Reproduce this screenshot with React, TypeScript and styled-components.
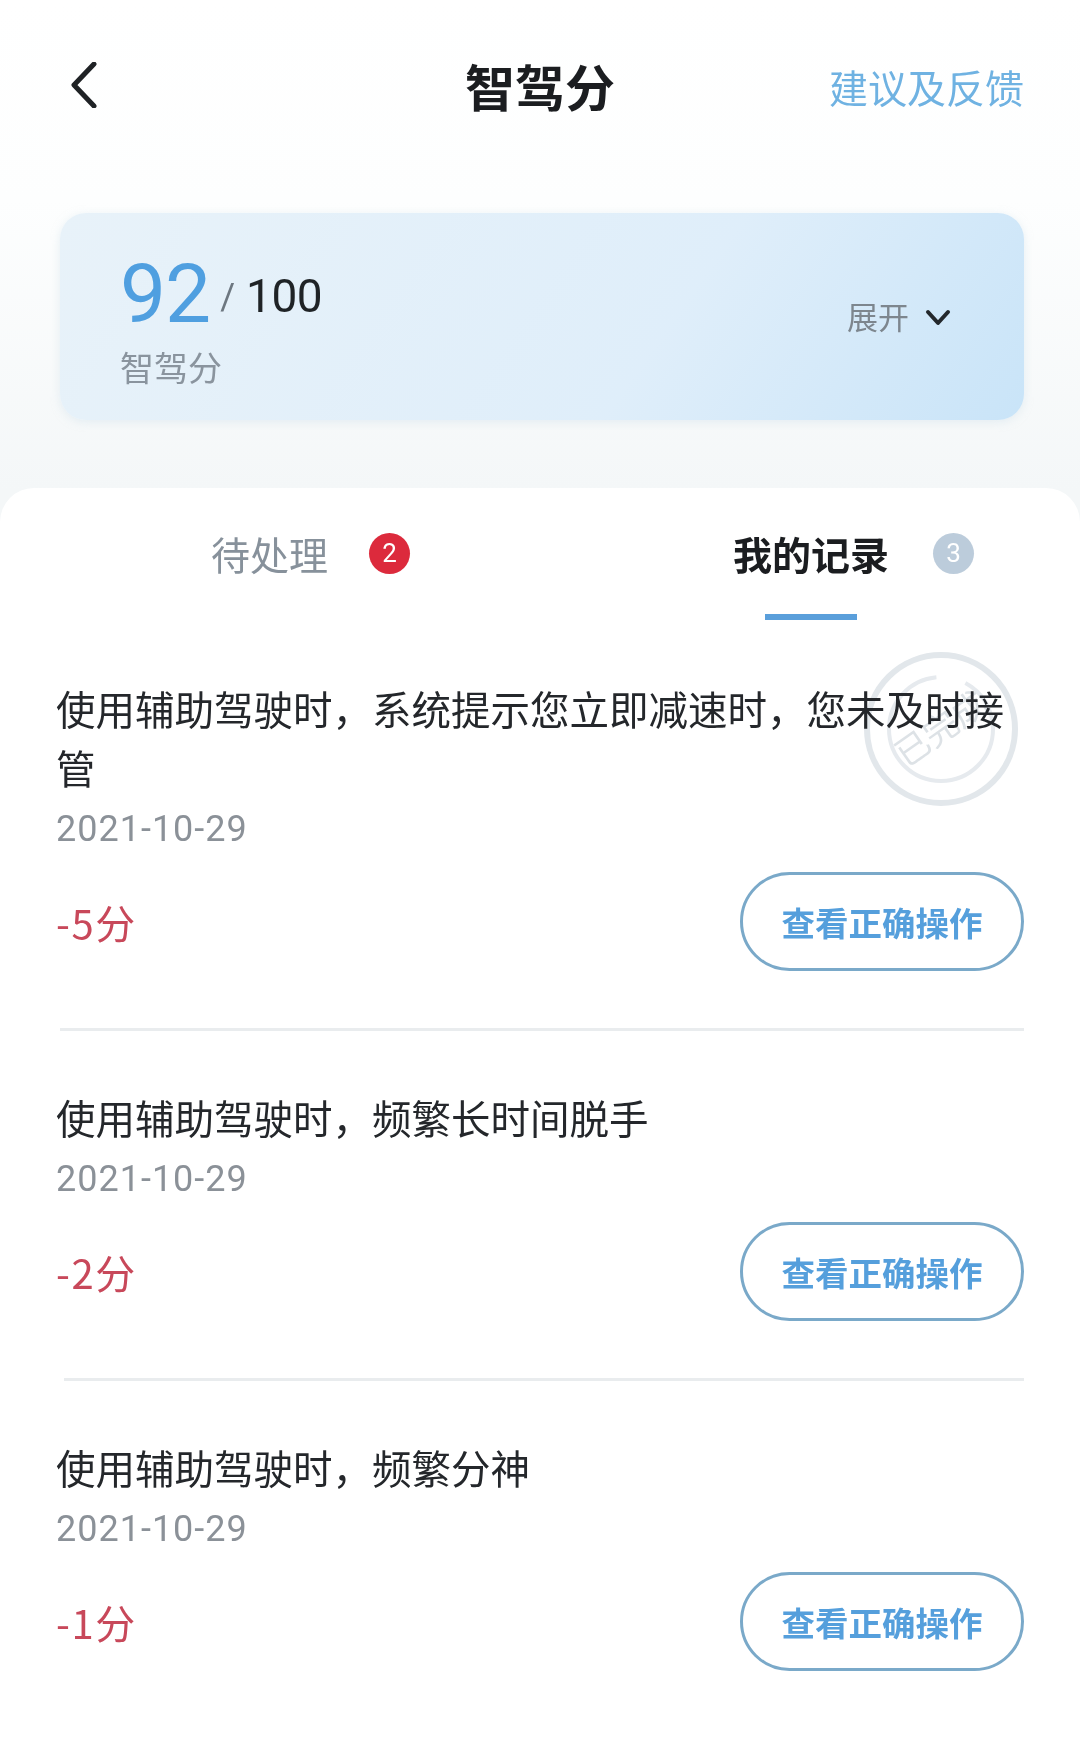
import React from 'react'
import styled, { createGlobalStyle } from 'styled-components'

const GlobalStyle = createGlobalStyle`
  html, body {
    margin: 0;
    padding: 0;
    background: #ffffff;
  }
  body {
    font-family: "Noto Sans CJK SC", "Noto Sans", sans-serif;
  }
`

const Page = styled.div`
  width: 1080px;
  height: 1742px;
  overflow: hidden;
  background: linear-gradient(180deg, #ffffff 0, #fdfefe 200px, #f4f7f8 490px);
  filter: blur(0.6px);
`

const Header = styled.header`
  position: relative;
  height: 213px;
  padding: 62px 56px 0 70px;
  box-sizing: border-box;
  display: flex;
  align-items: flex-start;
  justify-content: space-between;
`

const BackIcon = styled.svg`
  width: 28px;
  height: 46px;
  display: block;
`

const Title = styled.h1`
  position: absolute;
  left: 0;
  right: 0;
  top: 54px;
  margin: 0;
  text-align: center;
  font-size: 50px;
  line-height: 62px;
  font-weight: 700;
  color: #1b1d20;
`

const Feedback = styled.a`
  font-size: 39px;
  line-height: 50px;
  margin-top: -1px;
  color: #6fb2e2;
`

const ScoreCard = styled.section`
  margin: 0 56px 0 60px;
  height: 207px;
  box-sizing: border-box;
  padding: 42px 73px 0 60px;
  border-radius: 26px;
  background: linear-gradient(125deg, #e8f2f9 0%, #dfeefa 62%, #c9e4f8 100%);
  box-shadow: 0 2px 8px rgba(210, 225, 235, 0.5);
  display: flex;
  justify-content: space-between;
`

const ScoreLine = styled.div`
  display: flex;
  align-items: flex-start;
  height: 78px;
  font-family: Roboto, "Liberation Sans", sans-serif;
`

const ScoreValue = styled.span`
  font-size: 82px;
  line-height: 78px;
  color: #4f9fe0;
  letter-spacing: -1px;
`

const ScoreSlash = styled.span`
  font-size: 36px;
  line-height: 44px;
  margin: 20px 11px 0 10px;
  color: #6d7780;
`

const ScoreTotal = styled.span`
  font-size: 46px;
  line-height: 54px;
  margin-top: 14px;
  color: #1f2326;
  letter-spacing: -0.5px;
`

const ScoreLabel = styled.div`
  margin-top: 12px;
  font-size: 34px;
  line-height: 44px;
  color: #8a949e;
`

const Expand = styled.div`
  display: flex;
  align-items: center;
  gap: 16px;
  height: 42px;
  margin-top: 42px;
  font-size: 31px;
  color: #7d868e;
`

const ExpandLabel = styled.span`
  margin-bottom: 5px;
`

const ChevronDown = styled.svg`
  width: 26px;
  height: 18px;
  display: block;
`

const Panel = styled.main`
  margin-top: 68px;
  height: 1254px;
  box-sizing: border-box;
  background: #ffffff;
  border-radius: 34px 34px 0 0;
  padding: 0 56px;
`

const Tabs = styled.nav`
  display: grid;
  grid-template-columns: 484px 484px;
  height: 132px;
`

const Tab = styled.div<{ $left: number }>`
  position: relative;
  display: flex;
  align-items: center;
  height: 132px;
  padding-left: ${p => p.$left}px;
  padding-bottom: 2px;
  box-sizing: border-box;
`

const TabText = styled.span<{ $active?: boolean }>`
  font-size: 39px;
  line-height: 50px;
  white-space: nowrap;
  font-weight: ${p => (p.$active ? 700 : 400)};
  color: ${p => (p.$active ? '#1b1d20' : '#87919b')};
`

const Badge = styled.span<{ $color: string; $gap: number }>`
  flex: none;
  margin-left: ${p => p.$gap}px;
  width: 41px;
  height: 41px;
  border-radius: 50%;
  background: ${p => p.$color};
  color: #ffffff;
  font-family: Roboto, "Liberation Sans", sans-serif;
  font-size: 26px;
  display: flex;
  align-items: center;
  justify-content: center;
`

const TabLine = styled.span`
  position: absolute;
  left: 225px;
  top: 126px;
  width: 92px;
  height: 6px;
  background: #5a9fdb;
`

const Record = styled.article<{ $first?: boolean }>`
  position: relative;
  padding-top: ${p => (p.$first ? 58 : 56)}px;
`

const RecordText = styled.p`
  position: relative;
  z-index: 1;
  margin: 0;
  width: 960px;
  font-size: 39.5px;
  line-height: 59px;
  color: #24272b;
`

const RecordDate = styled.div`
  margin-top: 8px;
  font-family: Roboto, "Liberation Sans", sans-serif;
  font-size: 36px;
  letter-spacing: 1px;
  line-height: 50px;
  color: #8b9198;
`

const RecordFoot = styled.div`
  margin-top: 18px;
  display: flex;
  align-items: center;
  justify-content: space-between;
`

const Deduction = styled.span`
  font-size: 40px;
  letter-spacing: 1.6px;
  line-height: 50px;
  color: #c8485a;
`

const GuideButton = styled.button`
  width: 284px;
  height: 99px;
  padding: 0;
  border: 3px solid #7aa9c9;
  border-radius: 50px;
  background: #ffffff;
  font-family: inherit;
  font-size: 33.5px;
  font-weight: 700;
  color: #559fdc;
`

const Divider = styled.hr<{ $inset: number }>`
  margin: 57px 0 0 ${p => p.$inset}px;
  border: 0;
  height: 3px;
  background: #e9ecee;
`

const Stamp = styled.svg`
  position: absolute;
  right: 3px;
  top: 29px;
  width: 160px;
  height: 160px;
`

const StampText = styled.text`
  font-family: "Noto Sans CJK SC", sans-serif;
  font-size: 34px;
  fill: #dde2e6;
`

const RECORDS = [
  {
    id: 1,
    text: '使用辅助驾驶时，系统提示您立即减速时，您未及时接管',
    score: '-5分',
    stamped: true
  },
  { id: 2, text: '使用辅助驾驶时，频繁长时间脱手', score: '-2分', stamped: false },
  { id: 3, text: '使用辅助驾驶时，频繁分神', score: '-1分', stamped: false }
]

const App = () => (
  <Page>
    <GlobalStyle />
    <Header>
      <BackIcon viewBox="0 0 28 46" fill="none">
        <path d="M24 2 L4 23 L24 44" stroke="#1f2225" strokeWidth="5" strokeLinecap="round" strokeLinejoin="round" />
      </BackIcon>
      <Title>智驾分</Title>
      <Feedback>建议及反馈</Feedback>
    </Header>
    <ScoreCard>
      <div>
        <ScoreLine>
          <ScoreValue>92</ScoreValue>
          <ScoreSlash>/</ScoreSlash>
          <ScoreTotal>100</ScoreTotal>
        </ScoreLine>
        <ScoreLabel>智驾分</ScoreLabel>
      </div>
      <Expand>
        <ExpandLabel>展开</ExpandLabel>
        <ChevronDown viewBox="0 0 26 18" fill="none">
          <path d="M3 3 L13 14 L23 3" stroke="#24282c" strokeWidth="4" strokeLinecap="round" strokeLinejoin="round" />
        </ChevronDown>
      </Expand>
    </ScoreCard>
    <Panel>
      <Tabs>
        <Tab $left={155}>
          <TabText>待处理</TabText>
          <Badge $color="#dc2a3c" $gap={41}>2</Badge>
        </Tab>
        <Tab $left={193}>
          <TabText $active>我的记录</TabText>
          <Badge $color="#bcccdb" $gap={44}>3</Badge>
          <TabLine />
        </Tab>
      </Tabs>
      {RECORDS.map((r, i) => (
        <Record key={r.id} $first={i === 0}>
          {r.stamped && (
            <Stamp viewBox="0 0 160 160" fill="none">
              <circle cx="80" cy="80" r="74" stroke="#e2e7eb" strokeWidth="6" />
              <circle cx="80" cy="80" r="52" stroke="#e6eaee" strokeWidth="4" strokeDasharray="240 30" />
              <StampText x="80" y="92" textAnchor="middle" transform="rotate(-35 80 80)">已完成</StampText>
            </Stamp>
          )}
          <RecordText>{r.text}</RecordText>
          <RecordDate>2021-10-29</RecordDate>
          <RecordFoot>
            <Deduction>{r.score}</Deduction>
            <GuideButton>查看正确操作</GuideButton>
          </RecordFoot>
          {i < RECORDS.length - 1 && <Divider $inset={i === 0 ? 4 : 8} />}
        </Record>
      ))}
    </Panel>
  </Page>
)

export default App
